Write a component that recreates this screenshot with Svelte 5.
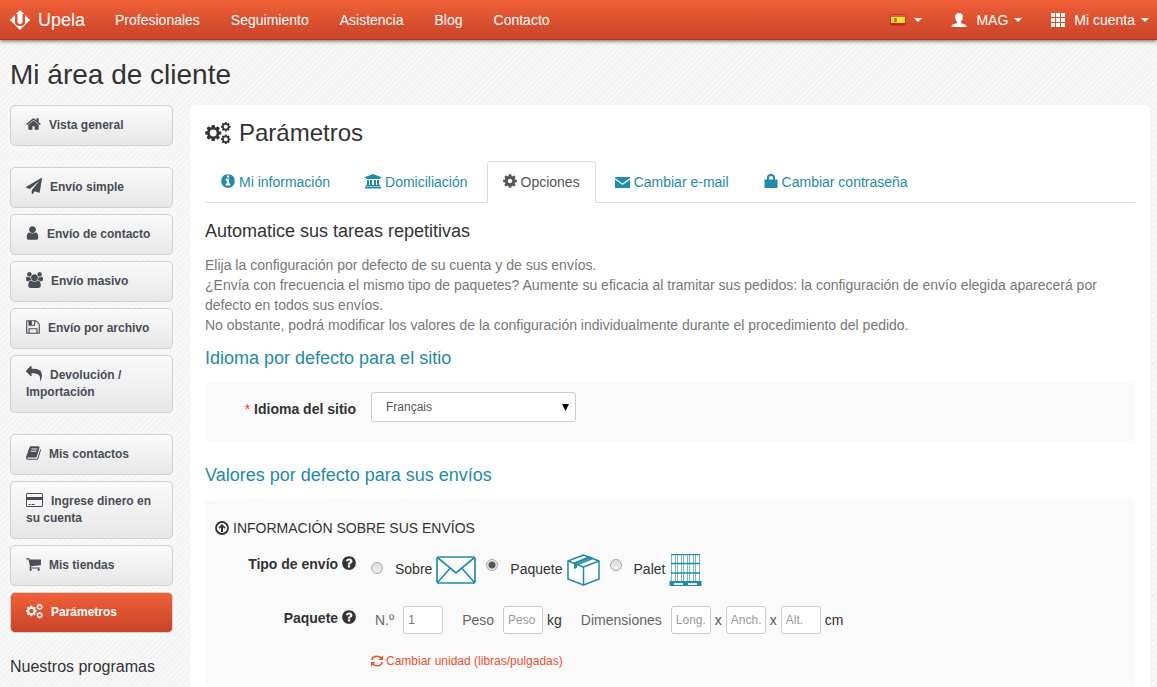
<script>
  const teeth = 'm512-109v222q0 12-8 23t-20 13l-185 28q-19 54-39 91 35 50 107 138 10 12 10 25t-9 23q-27 37-99 108t-94 71q-12 0-26-9l-138-108q-44 23-91 38-16 136-29 186-7 28-36 28h-222q-14 0-24.5-8.5t-11.5-21.5l-28-184q-49-16-90-37l-141 107q-10 9-25 9-14 0-25-11-126-114-165-168-7-10-7-23 0-12 8-23 15-21 51-66.5t54-70.5q-27-50-41-99l-183-27q-13-2-21-12.5t-8-23.5v-222q0-12 8-23t19-13l186-28q14-46 39-92-40-57-107-138-10-12-10-24 0-10 9-23 26-36 98.5-107.5t94.5-71.5q13 0 26 10l138 107q44-23 91-38 16-136 29-186 7-28 36-28h222q14 0 24.5 8.5t11.5 21.5l28 184q49 16 90 37l142-107q9-9 24-9 13 0 25 10 129 119 165 170 7 8 7 22 0 12-8 23-15 21-51 66.5t-54 70.5q26 50 41 98l183 28q13 2 21 12.5t8 23.5z';
  const cog = 'M1152 896q0-106-75-181t-181-75-181 75-75 181 75 181 181 75 181-75 75-181z' + teeth;
  const openCog = 'M1226 896a330 330 0 1 0-660 0a330 330 0 1 0 660 0zM1152 896' + teeth;
  const disc = 'm640 416q0 209-103 385.5t-279.5 279.5-385.5 103-385.5-103-279.5-279.5-103-385.5 103-385.5 279.5-279.5 385.5-103 385.5 103 279.5 279.5 103 385.5z';

  const icons = {
    home: { box: '64 0 1664 1792', w: 15, d: 'M1472 992v480q0 26-19 45t-45 19h-384v-384h-256v384h-384q-26 0-45-19t-19-45v-480q0-1 .5-3t.5-3l575-474 575 474q1 2 1 6zm223-69l-62 74q-8 9-21 11h-3q-13 0-21-7l-692-577-692 577q-12 8-24 7-13-2-21-11l-62-74q-8-10-7-23.5t11-21.5l719-599q32-26 76-26t76 26l244 204v-195q0-14 9-23t23-9h192q14 0 23 9t9 23v408l219 182q10 8 11 21.5t-7 23.5z' },
    plane: { box: '0 0 1792 1792', w: 16, d: 'M1764 11q33 24 27 64l-256 1536q-5 29-32 45-14 8-31 8-11 0-24-5l-453-185-242 295q-18 23-49 23-13 0-22-4-19-7-30.5-23.5t-11.5-36.5v-349l864-1059-1069 925-395-162q-37-14-40-55-2-40 32-59l1664-960q15-9 32-9 20 0 36 11z' },
    user: { box: '256 0 1280 1792', w: 13, d: 'M1536 1399q0 109-62.5 187t-150.5 78h-854q-88 0-150.5-78t-62.5-187q0-85 8.5-160.5t31.5-152 58.5-131 94-89 134.5-34.5q131 128 313 128t313-128q76 0 134.5 34.5t94 89 58.5 131 31.5 152 8.5 160.5zm-256-887q0 159-112.5 271.5t-271.5 112.5-271.5-112.5-112.5-271.5 112.5-271.5 271.5-112.5 271.5 112.5 112.5 271.5z' },
    users: { box: '-64 0 1920 1792', w: 17, d: 'M529 896q-162 5-265 128h-134q-82 0-138-40.5t-56-118.5q0-353 124-353 6 0 43.5 21t97.5 42.5 119 21.5q67 0 133-23-5 37-5 66 0 139 81 256zm1071 637q0 120-73 189.5t-194 69.5h-874q-121 0-194-69.5t-73-189.5q0-53 3.5-103.5t14-109 26.5-108.5 43-97.5 62-81 85.5-53.5 111.5-20q10 0 43 21.5t73 48 107 48 135 21.5 135-21.5 107-48 73-48 43-21.5q61 0 111.5 20t85.5 53.5 62 81 43 97.5 26.5 108.5 14 109 3.5 103.5zm-1024-1277q0 106-75 181t-181 75-181-75-75-181 75-181 181-75 181 75 75 181zm704 384q0 159-112.5 271.5t-271.5 112.5-271.5-112.5-112.5-271.5 112.5-271.5 271.5-112.5 271.5 112.5 112.5 271.5zm576 225q0 78-56 118.5t-138 40.5h-134q-103-123-265-128 81-117 81-256 0-29-5-66 66 23 133 23 59 0 119-21.5t97.5-42.5 43.5-21q124 0 124 353zm-128-609q0 106-75 181t-181 75-181-75-75-181 75-181 181-75 181 75 75 181z' },
    floppy: { box: '128 0 1536 1792', w: 14, d: 'M512 1536h768v-384h-768v384zm896 0h128v-896q0-14-10-38.5t-20-34.5l-281-281q-10-10-34-20t-39-10v416q0 40-28 68t-68 28h-576q-40 0-68-28t-28-68v-416h-128v1280h128v-416q0-40 28-68t68-28h832q40 0 68 28t28 68v416zm-384-928v-320q0-13-9.5-22.5t-22.5-9.5h-192q-13 0-22.5 9.5t-9.5 22.5v320q0 13 9.5 22.5t22.5 9.5h192q13 0 22.5-9.5t9.5-22.5zm640 32v928q0 40-28 68t-68 28h-1344q-40 0-68-28t-28-68v-1344q0-40 28-68t68-28h928q40 0 88 20t76 48l280 280q28 28 48 76t20 88z' },
    reply: { box: '0 0 1792 1792', w: 16, d: 'M1792 1120q0 166-127 451-3 7-10.5 24t-13.5 30-13 22q-12 17-28 17-15 0-23.5-10t-8.5-25q0-9 2.5-26.5t2.5-23.5q5-68 5-123 0-112-19.5-200.5t-54-153.5-89-112-113.5-80-137.5-50-151-27.5-164.5-7.5h-224v256q0 26-19 45t-45 19-45-19l-512-512q-19-19-19-45t19-45l512-512q19-19 45-19t45 19 19 45v256h224q713 0 875 403 53 134 53 333z' },
    book: { box: '64 0 1664 1792', w: 15, d: 'M1703 478q40 57 18 129l-275 906q-19 64-76.5 107.5t-122.5 43.5h-923q-77 0-148.5-53.5t-99.5-131.5q-24-67-2-127 0-4 3-27t4-37q1-8-3-21.5t-3-19.5q2-11 8-21t16.5-23.5 16.5-23.5q23-38 45-91.5t30-91.5q3-10 .5-30t-.5-28q3-11 17-28t17-23q21-36 42-92t25-90q1-9-2.5-32t.5-28q4-13 22-30.5t22-22.5q19-26 42.5-84.5t27.5-96.5q1-8-3-25.5t-2-26.5q2-8 9-18t18-23 17-21q8-12 16.5-30.5t15-35 16-36 19.5-32 26.5-23.5 36-11.5 47.5 5.5l-1 3q38-9 51-9h761q74 0 114 56t18 130l-274 906q-36 119-71.5 153.5t-128.5 34.5h-869q-27 0-38 15-11 16-1 43 24 70 144 70h923q29 0 56-15.5t35-41.5l300-987q7-22 5-57 38 15 59 43zm-1064 2q-4 13 2 22.5t20 9.5h608q13 0 25.5-9.5t16.5-22.5l21-64q4-13-2-22.5t-20-9.5h-608q-13 0-25.5 9.5t-16.5 22.5zm-83 256q-4 13 2 22.5t20 9.5h608q13 0 25.5-9.5t16.5-22.5l21-64q4-13-2-22.5t-20-9.5h-608q-13 0-25.5 9.5t-16.5 22.5z' },
    card: { box: '0 0 17 16', w: 17, d: 'M1.500 1H15.500Q17 1 17 2.500V13.500Q17 15 15.500 15H1.500Q0 15 0 13.500V2.500Q0 1 1.500 1zM1 2.500V5H16V2.500Q16 2 15.500 2H1.500Q1 2 1 2.500zM1 8V13.500Q1 14 1.500 14H15.500Q16 14 16 13.500V8zM2.500 12H4.500V13H2.500zM5.500 12H8.500V13H5.500z' },
    cart: { box: '64 0 1664 1792', w: 15, d: 'M704 1536q0 52-38 90t-90 38-90-38-38-90 38-90 90-38 90 38 38 90zm896 0q0 52-38 90t-90 38-90-38-38-90 38-90 90-38 90 38 38 90zm128-1088v512q0 24-16.5 42.5t-40.5 21.5l-1044 122q13 60 13 70 0 16-24 64h920q26 0 45 19t19 45-19 45-45 19h-1024q-26 0-45-19t-19-45q0-11 8-31.5t16-36 21.5-40 15.5-29.5l-177-823h-204q-26 0-45-19t-19-45 19-45 45-19h256q16 0 28.5 6.500t19.500 15.500 13 24.500 8 26 5.500 29.500 4.500 26h1201q26 0 45 19t19 45z' },
    cog: { box: '128 0 1536 1792', w: 14, d: cog },
    info: { box: '128 0 1536 1792', w: 14, d: 'M1152 1376v-160q0-14-9-23t-23-9h-96v-512q0-14-9-23t-23-9h-320q-14 0-23 9t-9 23v160q0 14 9 23t23 9h96v320h-96q-14 0-23 9t-9 23v160q0 14 9 23t23 9h448q14 0 23-9t9-23zm-128-896v-160q0-14-9-23t-23-9h-192q-14 0-23 9t-9 23v160q0 14 9 23t23 9h192q14 0 23-9t9-23z' + disc },
    question: { box: '128 0 1536 1792', w: 14, d: 'M1024 1376v-192q0-14-9-23t-23-9h-192q-14 0-23 9t-9 23v192q0 14 9 23t23 9h192q14 0 23-9t9-23zm256-672q0-88-55.5-163t-138.5-116-170-41q-243 0-371 213-15 24 8 42l132 100q7 6 19 6 16 0 25-12 53-68 86-92 34-24 86-24 48 0 85.5 26t37.5 59q0 38-20 61t-68 45q-63 28-115.5 86.5t-52.5 125.5v36q0 14 9 23t23 9h192q14 0 23-9t9-23q0-19 21.5-49.5t54.5-49.5q32-18 49-28.5t46-35 44.5-48 28-60.5 12.5-81zm384 192q0 209-103 385.5t-279.500 279.500-385.500 103-385.500-103-279.500-279.500-103-385.500 103-385.500 279.500-279.500 385.500-103 385.500 103 279.500 279.500 103 385.500z' },
    bank: { box: '0 0 16 16', w: 16, d: 'M8 1L16 4V5H15V6H1V5H0V4zM2 7H4V12H5V7H7V12H9V7H11V12H12V7H14V12H15V13H1V12H2zM0 13.500H16V15.500H0z' },
    mail: { box: '0 0 15 16', w: 15, d: 'M0 4H15V5L7.500 10.500L0 5zM0 6.500L7.500 12L15 6.500V15H0z' },
    bag: { box: '0 0 14 16', w: 14, d: 'M0.500 6.500H3V4.500Q3 1 7 1T11 4.500V6.500H13.500V15H0.500zM5 6.500H9V4.500Q9 3 7 3T5 4.500z' }
  };

  const groups = [
    [['home', 'Vista general']],
    [['plane', 'Envío simple'], ['user', 'Envío de contacto'], ['users', 'Envío masivo'], ['floppy', 'Envío por archivo'], ['reply', 'Devolución / Importación']],
    [['book', 'Mis contactos'], ['card', 'Ingrese dinero en su cuenta'], ['cart', 'Mis tiendas'], ['cogs', 'Parámetros']]
  ];
  const tabs = [['info', 'Mi información'], ['bank', 'Domiciliación'], ['cog', 'Opciones'], ['mail', 'Cambiar e-mail'], ['bag', 'Cambiar contraseña']];
  const links = ['Profesionales', 'Seguimiento', 'Asistencia', 'Blog', 'Contacto'];

  let shipment = $state('paquete');
  let language = $state('Français');
  let count = $state('1');
</script>

{#snippet gears()}
  <g fill="currentColor" fill-rule="evenodd">
    <path d={openCog} transform="translate(-1.500 3) scale(.0122)" />
    <path d={openCog} transform="translate(17.500 .2) scale(.0073)" />
    <path d={openCog} transform="translate(17.500 14.800) scale(.0073)" />
  </g>
{/snippet}

{#snippet icon(name)}
  {#if name === 'cogs'}
    <svg class="icon" viewBox="0 0 30 28" width="17" height="16" aria-hidden="true">{@render gears()}</svg>
  {:else}
    <svg class="icon" viewBox={icons[name].box} width={icons[name].w} height="16" aria-hidden="true">
      <path fill="currentColor" fill-rule={name === 'card' ? 'evenodd' : 'nonzero'} d={icons[name].d} />
    </svg>
  {/if}
{/snippet}

<div class="page">
  <header>
    <a class="brand" href="#inicio">
      <svg viewBox="0 0 20 20" width="20" height="20" aria-hidden="true">
        <path fill="#fff" d="M5 5L0 10L10 20L20 10L15 5V12Q15 16 10 16T5 12z" />
        <path fill="#fff" d="M10 0L14 4H12.500V12Q12.500 14 10 14T7.500 12V4H6z" />
        <path d="M3 8.500V12.500M17 8.500V12.500" stroke="#fff" stroke-width="1.500" />
      </svg>
      <span>Upela</span>
    </a>
    <nav class="main-nav">
      {#each links as link}<a href="#{link}">{link}</a>{/each}
    </nav>
    <div class="account">
      <button type="button" aria-label="Español">
        <svg viewBox="0 0 16 14" width="16" height="14" aria-hidden="true">
          <rect y="1" width="16" height="12" rx="2" fill="#c33" />
          <path d="M1 3H15" stroke="#e4604c" stroke-width="2" />
          <rect x="1" y="4" width="14" height="6" fill="#ffe42c" />
          <rect x="4" y="5" width="3" height="4" fill="#c87832" />
          <rect x="1" y="10" width="14" height="2" fill="#df1820" />
        </svg>
        <i class="caret"></i>
      </button>
      <button type="button">
        <svg viewBox="0 0 16 16" width="16" height="16" aria-hidden="true"><path fill="#fff" d="M8 1C5.200 1 4 2.700 4.200 5L4.500 7C4.800 8.500 5.500 9 6 9.700V11L1.500 12.700Q.500 13.300 .500 15H15.500Q15.500 13.300 14.500 12.700L10 11V9.700C10.500 9 11.200 8.500 11.500 7L11.800 5C12 2.700 10.800 1 8 1z" /></svg>
        <span>MAG</span><i class="caret"></i>
      </button>
      <button type="button">
        <svg viewBox="0 0 14 14" width="14" height="14" aria-hidden="true"><path fill="#fff" d="M0 0H4V4H0zM5 0H9V4H5zM10 0H14V4H10zM0 5H4V9H0zM5 5H9V9H5zM10 5H14V9H10zM0 10H4V14H0zM5 10H9V14H5zM10 10H14V14H10z" /></svg>
        <span>Mi cuenta</span><i class="caret"></i>
      </button>
    </div>
  </header>

  <h1>Mi área de cliente</h1>

  <div class="columns">
    <aside>
      {#each groups as group}
        <nav class="group">
          {#each group as [name, text]}
            <a class="side" class:current={name === 'cogs'} href="#{name}">{@render icon(name)}{text}</a>
          {/each}
        </nav>
      {/each}
      <h4>Nuestros programas</h4>
    </aside>

    <main>
      <h2>
        <svg viewBox="0 0 30 28" width="26" height="24" aria-hidden="true">{@render gears()}</svg>
        <span>Parámetros</span>
      </h2>
      <nav class="tabs">
        {#each tabs as [name, text]}
          <a class:active={name === 'cog'} href="#{name}">{@render icon(name)}{text}</a>
        {/each}
      </nav>

      <h3>Automatice sus tareas repetitivas</h3>
      <p>
        Elija la configuración por defecto de su cuenta y de sus envíos.<br />
        ¿Envía con frecuencia el mismo tipo de paquetes? Aumente su eficacia al tramitar sus pedidos: la configuración de envío elegida aparecerá por defecto en todos sus envíos.<br />
        No obstante, podrá modificar los valores de la configuración individualmente durante el procedimiento del pedido.
      </p>

      <h3 class="teal">Idioma por defecto para el sitio</h3>
      <section class="well language">
        <label class="name" for="language"><span class="required">*</span> Idioma del sitio</label>
        <select id="language" bind:value={language}>
          <option>Français</option>
          <option>Español</option>
        </select>
      </section>

      <h3 class="teal">Valores por defecto para sus envíos</h3>
      <section class="well shipping">
        <h5>
          <svg viewBox="0 0 14 14" width="14" height="14" aria-hidden="true">
            <circle cx="7" cy="7" r="6" fill="none" stroke="currentColor" stroke-width="1.800" />
            <path d="M7 3L10.500 6.500L9.500 7.700L8 6.300V11H6V6.300L4.500 7.700L3.500 6.500z" fill="currentColor" />
          </svg>
          <span>INFORMACIÓN SOBRE SUS ENVÍOS</span>
        </h5>

        <div class="row types">
          <span class="name" id="type">Tipo de envío {@render icon('question')}</span>
          <div class="choices" role="radiogroup" aria-labelledby="type">
            <label>
              <input type="radio" name="type" value="sobre" bind:group={shipment} />
              <span>Sobre</span>
              <svg viewBox="0 0 40 28" width="40" height="28" aria-hidden="true">
                <g fill="#fff" stroke="#238aa8" stroke-width="1.700">
                  <rect x="1" y="1" width="38" height="26" rx="2" />
                  <path d="M1.500 1.500L20 17L38.500 1.500M1.500 26.500L14 12.500M38.500 26.500L26 12.500" fill="none" />
                </g>
              </svg>
            </label>
            <label>
              <input type="radio" name="type" value="paquete" bind:group={shipment} />
              <span>Paquete</span>
              <svg viewBox="0 0 33 32" width="33" height="32" aria-hidden="true">
                <g fill="#fff" stroke="#238aa8" stroke-width="1.500" stroke-linejoin="round">
                  <path d="M1 7L16.500 1L32 7V25L16.500 31L1 25z" />
                  <path d="M1 7L16.500 13L32 7M16.500 13V31" fill="none" />
                  <path d="M7 9.500L22 3L25.500 4.500L10 10.800" fill="none" />
                </g>
                <path d="M7 9L10 10.500V14L7 15z" fill="#238aa8" />
                <path d="M7.500 9.500L23 3.500" stroke="#238aa8" stroke-width="2" />
              </svg>
            </label>
            <label>
              <input type="radio" name="type" value="palet" bind:group={shipment} />
              <span>Palet</span>
              <svg viewBox="0 0 33 32" width="33" height="32" aria-hidden="true">
                <rect x="2" width="29" height="27" fill="#fff" />
                <path d="M2.500 0V27M6.500 0V27M8.500 0V27M12.500 0V27M14.500 0V27M18.500 0V27M20.500 0V27M24.500 0V27M26.500 0V27M30.500 0V27" stroke="#79b8ca" fill="none" />
                <path d="M2 .500H31M2 9.500H31M2 19H31" stroke="#238aa8" stroke-width="1.500" />
                <path d="M.500 27H32.500V32H.500z" fill="#238aa8" />
                <path d="M5 29H14V31H5zM19 29H28V31H19z" fill="#e4f2f6" />
              </svg>
            </label>
          </div>
        </div>

        <div class="row sizes">
          <span class="name">Paquete {@render icon('question')}</span>
          <div class="fields">
            <label for="count">N.º</label>
            <input id="count" type="text" bind:value={count} />
            <label class="spaced" for="weight">Peso</label>
            <input id="weight" type="text" placeholder="Peso" />
            <span class="unit">kg</span>
            <label class="spaced" for="length">Dimensiones</label>
            <input id="length" type="text" placeholder="Long." />
            <span class="unit times">x</span>
            <input type="text" placeholder="Anch." aria-label="Anchura" />
            <span class="unit times">x</span>
            <input type="text" placeholder="Alt." aria-label="Altura" />
            <span class="unit">cm</span>
          </div>
        </div>

        <button class="switch" type="button">
          <svg viewBox="0 0 12 12" width="12" height="12" aria-hidden="true">
            <path d="M1 5Q1.500 1.200 6 1.200Q8.500 1.200 10.200 3M11 7Q10.500 10.800 6 10.800Q3.500 10.800 1.800 9" fill="none" stroke="currentColor" stroke-width="1.600" />
            <path d="M12 .500V5H7.500zM0 11.500V7H4.500z" fill="currentColor" />
          </svg>
          <span>Cambiar unidad (libras/pulgadas)</span>
        </button>
      </section>
    </main>
  </div>
</div>

<style>
  :global(body) { margin: 0; }
  * { box-sizing: border-box; }
  .page {
    display: flex;
    flex-direction: column;
    min-height: 100vh;
    font: 14px/20px "Liberation Sans", Arial, sans-serif;
    color: #333;
    background: repeating-linear-gradient(135deg, #f3f3f3 0 1px, #f9f9f9 2px 3px, #f3f3f3 4px);
  }
  a { color: inherit; text-decoration: none; }
  button { font: inherit; color: inherit; background: none; border: 0; padding: 0; }
  h1, h2, h3, h4, h5, p { margin: 0; font-weight: 400; }
  svg { flex: none; }

  header {
    display: flex;
    align-items: center;
    height: 40px;
    padding: 0 8px 0 10px;
    color: #fff;
    background: linear-gradient(#f06038, #c84428);
    border-bottom: 1px solid #a83a22;
    box-shadow: 0 1px 4px rgba(0, 0, 0, .6);
  }
  .brand { display: flex; align-items: center; gap: 8px; font-size: 18px; }
  .main-nav { display: flex; gap: 31px; margin-left: 30px; }
  .account { display: flex; gap: 29px; margin-left: auto; }
  .account button { display: flex; align-items: center; gap: 8px; }
  .account button + button { gap: 9px; }
  .caret { border: 4px solid transparent; border-top-color: #fff; border-bottom: 0; }
  .account span + .caret { margin-left: -3px; }

  h1 { padding: 19px 10px 15px; font-size: 28px; line-height: 31px; }
  .columns {
    flex: 1;
    display: grid;
    grid-template-columns: 163px minmax(0, 1fr);
    gap: 17px;
    padding: 0 7px 0 10px;
  }
  .group { display: flex; flex-direction: column; gap: 6px; margin-bottom: 21px; }
  .side {
    padding: 11px 15px;
    border: 1px solid #d0d0d0;
    border-radius: 5px;
    background: linear-gradient(#fafafa, #e7e7e7);
    color: #484d56;
    font-size: 12px;
    font-weight: 700;
    line-height: 17px;
  }
  .icon { vertical-align: -2px; }
  .side .icon { margin: -4px 8px -2px 0; vertical-align: -1px; }
  .side.current { color: #fff; background: linear-gradient(#f06038, #c84428); }
  h4 { padding: 3px 0 0; font-size: 16px; line-height: 20px; }

  main {
    display: flex;
    flex-direction: column;
    padding: 13px 15px 0;
    background: #fff;
    border-radius: 5px 5px 0 0;
  }
  h2 { display: flex; align-items: center; gap: 8px; font-size: 24px; line-height: 30px; }
  .tabs { display: flex; gap: 3px; margin-top: 13px; border-bottom: 1px solid #ddd; color: #238aa8; }
  .tabs a { margin-bottom: -1px; padding: 10px 15px; border: 1px solid transparent; border-radius: 4px 4px 0 0; }
  .tabs .icon { margin-right: 4px; }
  .tabs .active { color: #555; background: #fff; border-color: #ddd #ddd #fff; }
  h3 { margin-top: 18px; font-size: 18px; line-height: 20px; }
  h3.teal { color: #238aa8; }
  p { margin-top: 14px; color: #777; }
  p + h3 { margin-top: 13px; }
  .well { margin-top: 14px; background: #fafafa; border-radius: 5px; }
  .well + h3 { margin-top: 23px; }
  .name { flex: none; width: 151px; text-align: right; font-weight: 700; }
  .required { color: #f0304a; font-weight: 400; }
  .language { display: flex; gap: 15px; padding: 10px 0 20px; }
  .language .name { padding-top: 7px; }
  select {
    appearance: none;
    width: 205px;
    height: 30px;
    padding: 0 14px;
    border: 1px solid #ccc;
    border-radius: 3px;
    color: #555;
    font: 12px "Liberation Sans", Arial, sans-serif;
    background: #fff url("data:image/svg+xml,%3Csvg xmlns='http://www.w3.org/2000/svg' width='7' height='7'%3E%3Cpath d='M0 0H7L3.5 7z'/%3E%3C/svg%3E") no-repeat right 6px center;
  }

  .shipping { flex: 1; padding: 19px 0 16px; }
  h5 { display: flex; align-items: center; gap: 4px; padding-left: 10px; font-size: 14px; line-height: 20px; }
  .row { display: flex; gap: 15px; }
  .types { margin-top: 16px; }
  .choices { display: flex; gap: 10px; }
  .choices label { display: flex; align-items: center; height: 32px; gap: 4px; }
  .choices span { padding-bottom: 2px; }
  input[type="radio"] {
    appearance: none;
    width: 12px;
    height: 12px;
    margin: 0 8px 10px 0;
    border: 1px solid #aaa;
    border-radius: 50%;
    background: linear-gradient(#ddd, #eee);
  }
  .choices label:first-child input { margin-bottom: 4px; }
  input[type="radio"]:checked { background: radial-gradient(circle, #555 0 3px, #e4e4e4 4px); }
  .sizes { margin-top: 20px; }
  .sizes .name { padding-top: 2px; }
  .fields { display: flex; align-items: center; color: #666; padding-left: 4px; }
  input[type="text"] {
    width: 40px;
    height: 28px;
    padding: 0 4px;
    border: 1px solid #ccc;
    border-radius: 3px;
    background: #fff;
    color: #777;
    font: 12px "Liberation Sans", Arial, sans-serif;
  }
  input::placeholder { color: #999; }
  .fields label { margin-right: 9px; }
  .fields .spaced { margin-left: 19px; }
  .unit { padding-left: 4px; color: #333; }
  .times { padding-right: 4px; color: #555; }
  .switch { display: flex; align-items: center; gap: 3px; margin: 17px 0 0 166px; color: #e8502e; font-size: 12px; line-height: 20px; }
</style>
